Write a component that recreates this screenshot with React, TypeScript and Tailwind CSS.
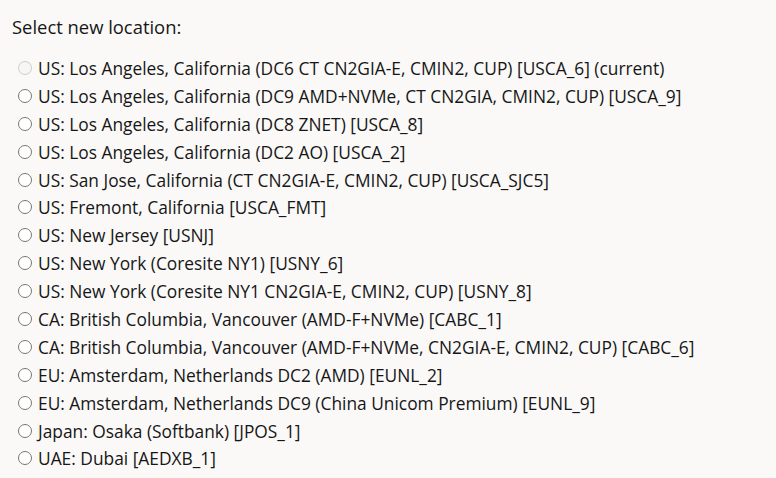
import React from "react";

const items = [
  "US: Los Angeles, California (DC6 CT CN2GIA-E, CMIN2, CUP) [USCA_6] (current)",
  "US: Los Angeles, California (DC9 AMD+NVMe, CT CN2GIA, CMIN2, CUP) [USCA_9]",
  "US: Los Angeles, California (DC8 ZNET) [USCA_8]",
  "US: Los Angeles, California (DC2 AO) [USCA_2]",
  "US: San Jose, California (CT CN2GIA-E, CMIN2, CUP) [USCA_SJC5]",
  "US: Fremont, California [USCA_FMT]",
  "US: New Jersey [USNJ]",
  "US: New York (Coresite NY1) [USNY_6]",
  "US: New York (Coresite NY1 CN2GIA-E, CMIN2, CUP) [USNY_8]",
  "CA: British Columbia, Vancouver (AMD-F+NVMe) [CABC_1]",
  "CA: British Columbia, Vancouver (AMD-F+NVMe, CN2GIA-E, CMIN2, CUP) [CABC_6]",
  "EU: Amsterdam, Netherlands DC2 (AMD) [EUNL_2]",
  "EU: Amsterdam, Netherlands DC9 (China Unicom Premium) [EUNL_9]",
  "Japan: Osaka (Softbank) [JPOS_1]",
  "UAE: Dubai [AEDXB_1]",
];

export default function App() {
  return (
    <div
      className="w-[776px] h-[478px] bg-[#faf9f8] text-[#161616] overflow-hidden"
      style={{ fontFamily: '"Open Sans", "Noto Sans", sans-serif' }}
    >
      <div className="pl-[12px] pt-[15px] text-[18.4px] leading-[24px]">Select new location:</div>
      <div className="flex flex-col pl-[13px] pt-[15px]">
        {items.map((t, i) => (
          <label key={i} className="flex items-center h-[27.9px] text-[17.35px]">
            <input
              type="radio"
              name="loc"
              disabled={i === 0}
              className="m-0 ml-[5px] mr-[6px] w-[14px] h-[14px]"
            />
            <span>{t}</span>
          </label>
        ))}
      </div>
    </div>
  );
}
